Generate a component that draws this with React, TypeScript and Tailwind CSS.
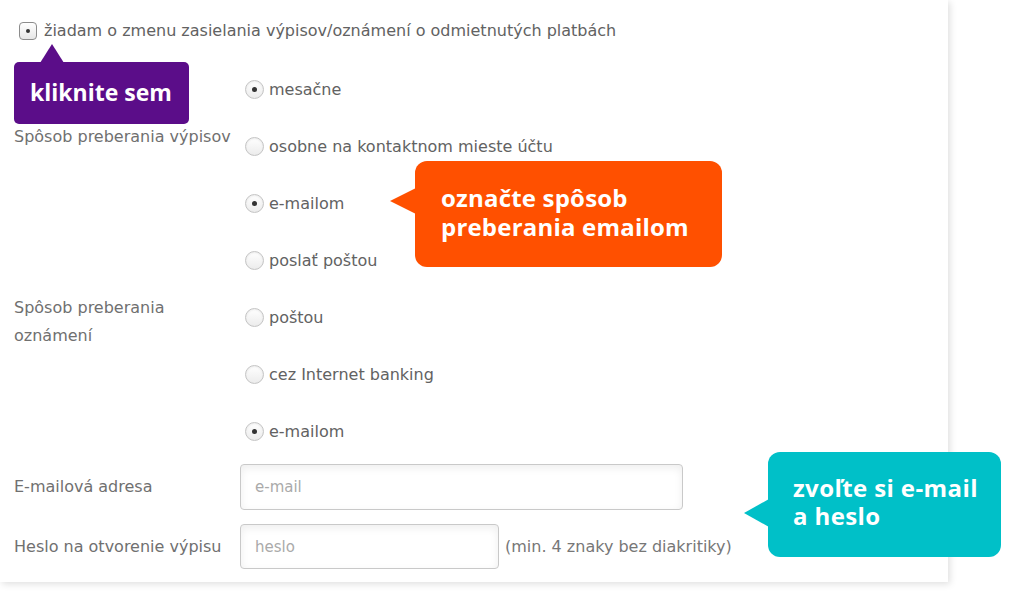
import React from 'react';

const font = { fontFamily: '"DejaVu Sans", "Liberation Sans", sans-serif' };
const bold = { fontFamily: '"Open Sans", "Noto Sans", sans-serif' };

function Radio({ checked, label }: { checked?: boolean; label: string }) {
    return (
        <div className="h-[57px] flex items-center">
            <span className="ml-[5px] w-[19px] h-[19px] rounded-full border border-[#c4c4c4] bg-gradient-to-b from-white to-[#ececec] shadow-[inset_0_1px_2px_rgba(0,0,0,0.08)] flex items-center justify-center">
                {checked && <span className="w-[5px] h-[5px] rounded-full bg-[#333]" />}
            </span>
            <span className="ml-[5px] text-[16px] text-[#626262]">{label}</span>
        </div>
    );
}

function Label({ children }: { children: React.ReactNode }) {
    return <div className="h-[57px] pt-[5px] text-[16px] leading-[28px] text-[#707070]">{children}</div>;
}

export default function App() {
    return (
        <div className="relative w-[1009px] h-[596px] bg-white overflow-hidden" style={font}>
            <div className="w-[948px] bg-white shadow-[2px_2px_7px_rgba(0,0,0,0.13)] pl-[14px] pb-[13px]">
                {/* checkbox */}
                <div className="h-[61px] flex items-center">
                    <span className="ml-[5px] w-[18px] h-[18px] rounded-[4px] border border-[#8c8c8c] bg-gradient-to-b from-white to-[#e6e6e6] flex items-center justify-center">
                        <span className="w-[4px] h-[4px] rounded-full bg-[#333]" />
                    </span>
                    <span className="ml-[7px] text-[16px] text-[#626262]">
                        žiadam o zmenu zasielania výpisov/oznámení o odmietnutých platbách
                    </span>
                </div>

                <div className="grid grid-cols-[226px_1fr]">
                    <Label>{''}</Label>
                    <Radio checked label="mesačne" />
                    <Label>Spôsob preberania výpisov</Label>
                    <Radio label="osobne na kontaktnom mieste účtu" />
                    <Label>{''}</Label>
                    <Radio checked label="e-mailom" />
                    <Label>{''}</Label>
                    <Radio label="poslať poštou" />
                    <Label>
                        Spôsob preberania
                        <br />
                        oznámení
                    </Label>
                    <Radio label="poštou" />
                    <Label>{''}</Label>
                    <Radio label="cez Internet banking" />
                    <Label>{''}</Label>
                    <Radio checked label="e-mailom" />
                </div>

                <div className="mt-[4px] flex items-center">
                    <div className="w-[226px] text-[16px] text-[#707070]">E-mailová adresa</div>
                    <input
                        placeholder="e-mail"
                        className="w-[443px] h-[46px] rounded-[4px] border border-[#c9c9c9] bg-white shadow-[inset_0_3px_8px_rgba(0,0,0,0.07)] pl-[14px] text-[15px] placeholder:text-[#aaa] outline-none"
                    />
                </div>
                <div className="mt-[14px] flex items-center">
                    <div className="w-[226px] text-[16px] text-[#707070]">Heslo na otvorenie výpisu</div>
                    <input
                        placeholder="heslo"
                        className="w-[259px] h-[45px] rounded-[4px] border border-[#c9c9c9] bg-white shadow-[inset_0_3px_8px_rgba(0,0,0,0.07)] pl-[14px] text-[15px] placeholder:text-[#aaa] outline-none"
                    />
                    <span className="ml-[6px] text-[16px] text-[#777]">(min. 4 znaky bez diakritiky)</span>
                </div>
            </div>

            {/* callouts */}
            <div className="absolute left-[14px] top-[62px] w-[175px] h-[62px] rounded-[5px] bg-[#5b0d89] flex items-center pl-[16px] pb-[2px] text-white font-bold text-[23px]" style={bold}>
                <span className="absolute left-[26px] -top-[18px] w-0 h-0 border-l-[12px] border-r-[12px] border-b-[19px] border-l-transparent border-r-transparent border-b-[#5b0d89]" />
                kliknite sem
            </div>

            <div className="absolute left-[415px] top-[161px] w-[307px] h-[106px] rounded-[12px] bg-[#ff5000] flex items-center pl-[26px] pb-[4px] text-white font-bold text-[24px] leading-[29px] tracking-[0.2px]" style={bold}>
                <span className="absolute -left-[25px] top-[27px] w-0 h-0 border-t-[13px] border-b-[13px] border-r-[26px] border-t-transparent border-b-transparent border-r-[#ff5000]" />
                <p>
                    označte spôsob
                    <br />
                    preberania emailom
                </p>
            </div>

            <div className="absolute left-[768px] top-[452px] w-[233px] h-[105px] rounded-[12px] bg-[#00c0c8] flex items-center pl-[25px] pb-[5px] text-white font-bold text-[24px] leading-[28px] tracking-[0.4px]" style={bold}>
                <span className="absolute -left-[24px] top-[47px] w-0 h-0 border-t-[14px] border-b-[14px] border-r-[25px] border-t-transparent border-b-transparent border-r-[#00c0c8]" />
                <p>
                    zvoľte si e-mail
                    <br />
                    a heslo
                </p>
            </div>
        </div>
    );
}
